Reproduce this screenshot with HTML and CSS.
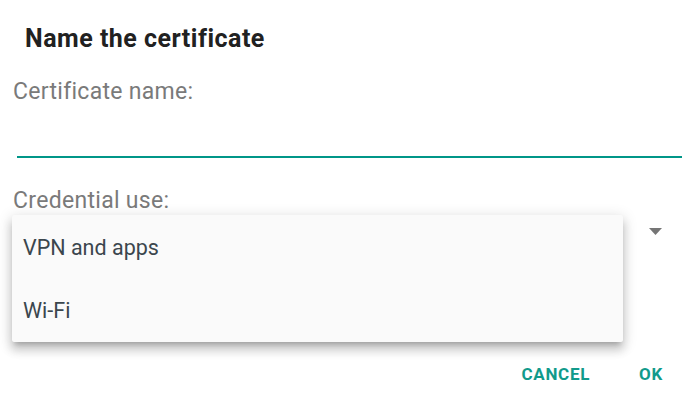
FILE: index.html
```html
<!DOCTYPE html>
<html lang="en">
<head>
<meta charset="utf-8">
<title>Name the certificate</title>
<link rel="stylesheet" href="styles.css">
</head>
<body>
<div class="dialog">
  <h1 class="title">Name the certificate</h1>
  <div class="label label-name">Certificate name:</div>
  <div class="input"></div>
  <div class="label label-use">Credential use:</div>
  <div class="select">
    <svg class="arrow" width="13" height="7" viewBox="0 0 13 7"><path d="M0 0 H13 L6.5 7 Z" fill="#757575"/></svg>
    <div class="menu">
      <div class="menu-item">VPN and apps</div>
      <div class="menu-item">Wi-Fi</div>
    </div>
  </div>
  <div class="actions">
    <span class="btn btn-cancel">CANCEL</span>
    <span class="btn btn-ok">OK</span>
  </div>
</div>
</body>
</html>
```
FILE: styles.css
```css
html, body {
  margin: 0;
  padding: 0;
  background: #ffffff;
}
body {
  font-family: Roboto, "Noto Sans", "Liberation Sans", sans-serif;
  width: 697px;
  height: 403px;
  overflow: hidden;
}
.dialog {
  padding: 25px 15px 0 13px;
  display: flex;
  flex-direction: column;
}
.title {
  margin: 0 0 0 12px;
  font-size: 25px;
  line-height: 28px;
  font-weight: 700;
  letter-spacing: 0.5px;
  color: #212121;
}
.label {
  font-size: 23px;
  line-height: 26px;
  letter-spacing: 0.3px;
  color: #7a7a7a;
}
.label-name {
  margin-top: 26px;
}
.input {
  margin-left: 4px;
  height: 51px;
  border-bottom: 2px solid #009688;
}
.label-use {
  margin-top: 30px;
}
.select {
  position: relative;
  height: 150px;
}
.arrow {
  position: absolute;
  left: 636px;
  top: 14px;
}
.menu {
  position: absolute;
  left: -1px;
  top: 1px;
  width: 611px;
  padding-top: 1px;
  background: #fafafa;
  border-radius: 2px;
  box-shadow: 0 8px 10px 1px rgba(0,0,0,0.14), 0 3px 14px 2px rgba(0,0,0,0.12), 0 5px 5px -3px rgba(0,0,0,0.2);
}
.menu-item {
  height: 63px;
  line-height: 63px;
  padding-left: 11px;
  font-size: 21.5px;
  color: #3b464d;
}
.actions {
  display: flex;
  justify-content: flex-end;
  padding-right: 19px;
  gap: 49px;
}
.btn {
  font-size: 17px;
  line-height: 20px;
  font-weight: 700;
  letter-spacing: 0.7px;
  color: #119a8b;
}
```
